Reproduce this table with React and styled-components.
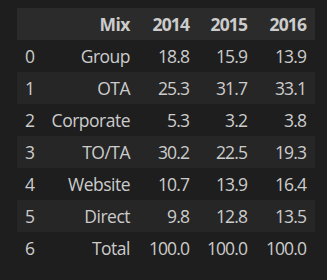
import React from "react";
import styled, { createGlobalStyle } from "styled-components";

const GlobalStyle = createGlobalStyle`
  html, body {
    margin: 0;
    padding: 0;
    background: #1e1e1e;
  }
`;

const Page = styled.div`
  width: 327px;
  height: 280px;
  padding: 8px 12px 0 17px;
  box-sizing: border-box;
  background: #1e1e1e;
  font-family: "Open Sans", "Noto Sans", sans-serif;
  color: #cccccc;
`;

const Table = styled.div`
  width: 298px;
`;

const Row = styled.div`
  display: grid;
  grid-template-columns: 24px 98px 59px 58px 59px;
  height: 32px;
  align-items: center;
  background: ${({ bg }) => bg || "transparent"};
  font-size: 17.5px;
  font-weight: ${({ head }) => (head ? 700 : 400)};
`;

const Cell = styled.div`
  text-align: ${({ left }) => (left ? "left" : "right")};
  padding: ${({ left }) => (left ? "0 0 0 8px" : "0 9px 0 0")};
  white-space: nowrap;
  letter-spacing: ${({ tight }) => (tight ? "-0.9px" : "-0.5px")};
`;

const rows = [
  ["0", "Group", "18.8", "15.9", "13.9"],
  ["1", "OTA", "25.3", "31.7", "33.1"],
  ["2", "Corporate", "5.3", "3.2", "3.8"],
  ["3", "TO/TA", "30.2", "22.5", "19.3"],
  ["4", "Website", "10.7", "13.9", "16.4"],
  ["5", "Direct", "9.8", "12.8", "13.5"],
  ["6", "Total", "100.0", "100.0", "100.0"],
];

const App = () => {
  return (
    <>
      <GlobalStyle />
      <Page>
        <Table>
          <Row head bg="#2b2b2b">
            <Cell left></Cell>
            <Cell>Mix</Cell>
            <Cell tight>2014</Cell>
            <Cell tight>2015</Cell>
            <Cell tight>2016</Cell>
          </Row>
          {rows.map((r, i) => (
            <Row key={i} bg={i % 2 === 1 ? "#262626" : null}>
              <Cell left>{r[0]}</Cell>
              <Cell>{r[1]}</Cell>
              <Cell tight>{r[2]}</Cell>
              <Cell tight>{r[3]}</Cell>
              <Cell tight>{r[4]}</Cell>
            </Row>
          ))}
        </Table>
      </Page>
    </>
  );
};

export default App;
